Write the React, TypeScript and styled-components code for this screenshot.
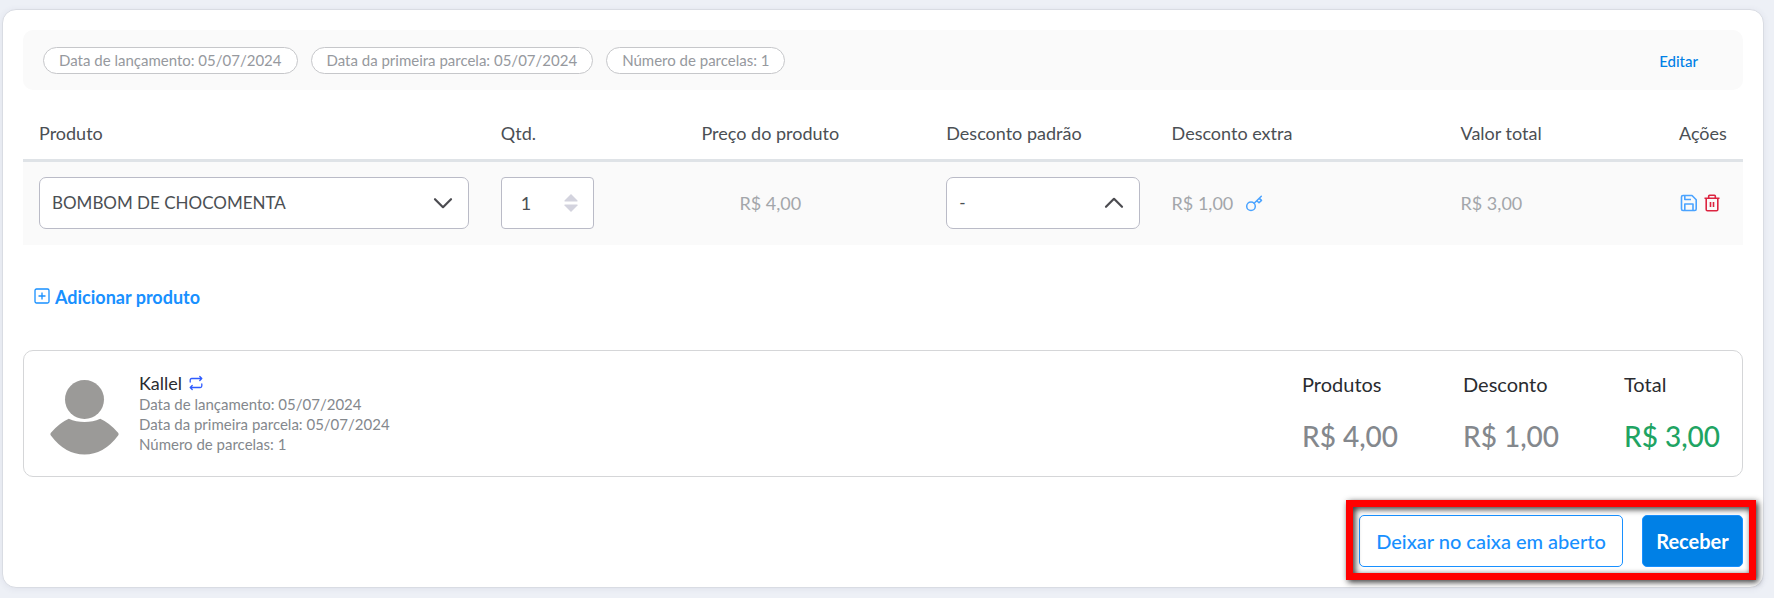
import React from "react";
import styled, { createGlobalStyle } from "styled-components";

const color = {
  page: "#edf0f6",
  edge: "#d9dce3",
  soft: "#fafafa",
  line: "#dfe3e7",
  field: "#babbc7",
  ink: "#4b4f54",
  dark: "#2a2c30",
  muted: "#a3a6aa",
  grey: "#84888d",
  link: "#1890ff",
  primary: "#0080e6",
  green: "#1fa463",
};

const GlobalStyle = createGlobalStyle`
  *, *::before, *::after { box-sizing: border-box; }
  body {
    margin: 0;
    background: ${color.page};
    color: ${color.ink};
    font-family: Lato, "Open Sans", sans-serif;
    font-size: 18px;
    line-height: 24px;
  }
  button, input, select { font: inherit; color: inherit; margin: 0; }
  button { cursor: pointer; }
`;

const Page = styled.div`
  padding: 9px 10px 10px 2px;
`;

const Card = styled.main`
  padding: 20px;
  background: #fff;
  border: 1px solid ${color.edge};
  border-radius: 14px;
  box-shadow: 0 1px 6px rgba(60, 70, 110, 0.08);
`;

const InfoBar = styled.section`
  display: flex;
  align-items: center;
  gap: 13px;
  min-height: 60px;
  padding: 1px 45px 0 20px;
  background: ${color.soft};
  border-radius: 10px;
`;

const Pill = styled.span`
  height: 27px;
  padding: 0 15px;
  border: 1px solid #c6c7ca;
  border-radius: 14px;
  background: #fff;
  color: #96999e;
  font-size: 15px;
  line-height: 25px;
  white-space: nowrap;
`;

const EditLink = styled.a`
  margin-left: auto;
  color: ${color.primary};
  font-size: 15px;
  font-weight: 500;
  text-decoration: none;
`;

const ProductTable = styled.table`
  width: 100%;
  margin-top: 18px;
  table-layout: fixed;
  border-collapse: separate;
  border-spacing: 0;
`;

const Col = styled.col<{ $share?: string }>`
  width: ${(p) => p.$share ?? "auto"};
`;

const Th = styled.th<{ $center?: boolean }>`
  height: 54px;
  padding: 0 16px 2px;
  border-bottom: 3px solid ${color.line};
  text-align: ${(p) => (p.$center ? "center" : "left")};
  font-weight: 400;
  white-space: nowrap;
`;

const Td = styled.td<{ $center?: boolean }>`
  padding: 15px 16px 16px;
  background: ${color.soft};
  color: ${color.muted};
  text-align: ${(p) => (p.$center ? "center" : "left")};
  white-space: nowrap;
`;

const Field = styled.div`
  position: relative;
  color: ${color.ink};
`;

const Select = styled.select<{ $indent: number }>`
  display: block;
  width: 100%;
  height: 52px;
  padding: 0 40px 0 ${(p) => p.$indent}px;
  appearance: none;
  background: #fff;
  border: 1px solid ${color.field};
  border-radius: 7px;
  font-size: 17px;
`;

const Quantity = styled.input`
  display: block;
  width: 100%;
  height: 52px;
  padding: 0 30px 0 19px;
  appearance: textfield;
  background: #fff;
  border: 1px solid ${color.field};
  border-radius: 4px;
  &::-webkit-inner-spin-button { display: none; }
`;

const FieldIcon = styled.svg`
  position: absolute;
  top: 50%;
  right: 16px;
  transform: translateY(-50%);
  pointer-events: none;
`;

const Inline = styled.div<{ $gap: number }>`
  display: flex;
  align-items: center;
  gap: ${(p) => p.$gap}px;
`;

const IconButton = styled.button<{ $tint: string }>`
  display: flex;
  padding: 0;
  border: 0;
  background: none;
  color: ${(p) => p.$tint};
`;

const RowActions = styled(Inline)`
  padding-left: 1px;
`;

const AddButton = styled.button`
  display: flex;
  align-items: center;
  gap: 5px;
  margin: 40px 0 41px 11px;
  padding: 0;
  border: 0;
  background: none;
  color: ${color.link};
  font-weight: 700;
`;

const Summary = styled.section`
  display: flex;
  align-items: flex-start;
  min-height: 127px;
  padding: 21px 20px 20px 26px;
  border: 1px solid #d5d6d8;
  border-radius: 10px;
`;

const Customer = styled.div`
  margin-left: 20px;
  color: ${color.grey};
  font-size: 15px;
  line-height: 20px;
`;

const CustomerName = styled.div`
  display: flex;
  align-items: center;
  gap: 7px;
  color: ${color.dark};
  font-size: 18px;
  line-height: 22px;
`;

const Totals = styled.dl`
  display: grid;
  grid-template-columns: 161px 161px 98px;
  margin: 0 0 0 auto;
`;

const Label = styled.dt`
  color: ${color.dark};
  font-size: 20px;
  line-height: 24px;
`;

const Amount = styled.dd<{ $tint?: string }>`
  margin: 24px 0 0;
  color: ${(p) => p.$tint ?? color.grey};
  font-size: 28px;
  font-weight: 500;
  line-height: 32px;
  white-space: nowrap;
`;

const Actions = styled.div`
  position: relative;
  display: flex;
  gap: 19px;
  width: max-content;
  margin: 38px 0 0 auto;
`;

const Highlight = styled.div`
  position: absolute;
  inset: -15px -13px -13px;
  border: 7px solid #f00;
  filter: drop-shadow(2px 2px 3px rgba(0, 0, 0, 0.85));
  pointer-events: none;
`;

const Button = styled.button<{ $solid?: boolean }>`
  min-width: ${(p) => (p.$solid ? 101 : 264)}px;
  height: 52px;
  padding: 0 12px;
  border: 1px solid ${color.link};
  border-radius: 5px;
  background: ${(p) => (p.$solid ? color.primary : "#fff")};
  color: ${(p) => (p.$solid ? "#fff" : color.link)};
  font-size: 20px;
  font-weight: ${(p) => (p.$solid ? 700 : 500)};
`;

const AvatarSvg = styled.svg`
  margin-top: 7px;
`;

const Chevron = ({ up }: { up?: boolean }) => (
  <FieldIcon width="20" height="12" viewBox="0 0 20 12" fill="none" stroke="#4b4b50" strokeWidth="2.2" strokeLinecap="round" strokeLinejoin="round" aria-hidden>
    <path d={up ? "M2 9.800 10 1.800l8 8" : "M2 2.200 10 10.200l8-8"} />
  </FieldIcon>
);

const Stepper = () => (
  <FieldIcon width="14" height="18" viewBox="0 0 14 18" fill="#d3d3de" aria-hidden>
    <path d="M7 0 13.500 6.400Q14 7.500 13 7.500H1Q0 7.500 .5 6.400Z" />
    <path d="M7 18 13.500 11.600Q14 10.500 13 10.500H1Q0 10.500 .5 11.600Z" />
  </FieldIcon>
);

const KeyIcon = () => (
  <svg width="18" height="18" viewBox="0 0 18 18" fill="none" stroke="currentColor" strokeWidth="1.500" strokeLinejoin="round" strokeLinecap="round" aria-hidden>
    <circle cx="6" cy="12.300" r="4.300" />
    <path d="M9.200 9.200 16.300 2.200M11.800 6.700 14 8.800 16.500 6.400 14.300 4.200" />
  </svg>
);

const SaveIcon = () => (
  <svg width="18" height="18" viewBox="0 0 18 18" fill="none" stroke="currentColor" strokeWidth="1.600" strokeLinejoin="round" aria-hidden>
    <path d="M3 1.500H12L16.200 5.800V15Q16.200 16.500 14.700 16.500H3Q1.500 16.500 1.500 15V3Q1.500 1.500 3 1.500Z" />
    <path d="M4.800 16.500V10H13V16.500M4.800 1.500V5.500H11" />
  </svg>
);

const TrashIcon = () => (
  <svg width="18" height="18" viewBox="0 0 18 18" fill="none" stroke="currentColor" strokeWidth="1.600" strokeLinejoin="round" aria-hidden>
    <path d="M1.500 4.300H16.500M5.700 4.300V2Q5.700 1.200 6.500 1.200H11.500Q12.300 1.200 12.300 2V4.300M3.200 4.300V15.500Q3.200 16.800 4.500 16.800H13.500Q14.800 16.800 14.800 15.500V4.300M7.500 8V13M10.500 8V13" />
  </svg>
);

const PlusSquare = () => (
  <svg width="16" height="18" viewBox="0 0 16 18" fill="none" stroke="currentColor" strokeWidth="1.300" aria-hidden>
    <rect x="1" y="1" width="14" height="14" rx="1.500" />
    <path d="M8 4.500V11.500M4.500 8H11.500" />
  </svg>
);

const SwapIcon = () => (
  <svg width="14" height="16" viewBox="0 0 14 16" fill="none" stroke="currentColor" strokeWidth="1.300" strokeLinejoin="round" strokeLinecap="round" aria-hidden>
    <path d="M1.200 7V5Q1.200 3.500 2.700 3.500H12.800M10.800 1.500 12.800 3.500 10.800 5.500M12.800 9V11Q12.800 12.500 11.300 12.500H1.200M3.200 10.500 1.200 12.500 3.200 14.500" />
  </svg>
);

const Avatar = () => (
  <AvatarSvg width="69" height="76" viewBox="0 0 69 76" fill="#9b9a98" role="img" aria-label="Kallel">
    <circle cx="34.500" cy="20.500" r="19.500" />
    <path d="M18.800 39.700Q26 43 34.500 43T50.200 39.700Q60 44 68.300 54Q69 55.200 68.300 56.200Q54 75.500 34.500 75.500T.7 56.200Q0 55.200 .7 54Q9 44 18.800 39.700Z" />
  </AvatarSvg>
);

export default function App() {
  return (
    <Page>
      <GlobalStyle />
      <Card>
        <InfoBar>
          <Pill>Data de lançamento: 05/07/2024</Pill>
          <Pill>Data da primeira parcela: 05/07/2024</Pill>
          <Pill>Número de parcelas: 1</Pill>
          <EditLink href="#editar">Editar</EditLink>
        </InfoBar>

        <ProductTable>
          <colgroup>
            <Col $share="26.85%" />
            <Col $share="7.3%" />
            <Col $share="18.6%" />
            <Col $share="13.1%" />
            <Col $share="16.8%" />
            <Col $share="12.7%" />
            <Col />
          </colgroup>
          <thead>
            <tr>
              <Th scope="col">Produto</Th>
              <Th scope="col">Qtd.</Th>
              <Th scope="col" $center>Preço do produto</Th>
              <Th scope="col">Desconto padrão</Th>
              <Th scope="col">Desconto extra</Th>
              <Th scope="col">Valor total</Th>
              <Th scope="col">Ações</Th>
            </tr>
          </thead>
          <tbody>
            <tr>
              <Td>
                <Field>
                  <Select $indent={12} aria-label="Produto">
                    <option>BOMBOM DE CHOCOMENTA</option>
                  </Select>
                  <Chevron />
                </Field>
              </Td>
              <Td>
                <Field>
                  <Quantity type="number" aria-label="Qtd." defaultValue={1} min={1} />
                  <Stepper />
                </Field>
              </Td>
              <Td $center>R$ 4,00</Td>
              <Td>
                <Field>
                  <Select $indent={12} aria-label="Desconto padrão">
                    <option>-</option>
                  </Select>
                  <Chevron up />
                </Field>
              </Td>
              <Td>
                <Inline $gap={12}>
                  R$ 1,00
                  <IconButton $tint="#4aa3ff" aria-label="Liberar desconto extra"><KeyIcon /></IconButton>
                </Inline>
              </Td>
              <Td>R$ 3,00</Td>
              <Td>
                <RowActions $gap={5}>
                  <IconButton $tint="#4aa3ff" aria-label="Salvar"><SaveIcon /></IconButton>
                  <IconButton $tint="#dc2440" aria-label="Excluir"><TrashIcon /></IconButton>
                </RowActions>
              </Td>
            </tr>
          </tbody>
        </ProductTable>

        <AddButton><PlusSquare />Adicionar produto</AddButton>

        <Summary>
          <Avatar />
          <Customer>
            <CustomerName>
              Kallel
              <IconButton $tint="#2f5bff" aria-label="Trocar cliente"><SwapIcon /></IconButton>
            </CustomerName>
            <div>Data de lançamento: 05/07/2024</div>
            <div>Data da primeira parcela: 05/07/2024</div>
            <div>Número de parcelas: 1</div>
          </Customer>
          <Totals>
            <div><Label>Produtos</Label><Amount>R$ 4,00</Amount></div>
            <div><Label>Desconto</Label><Amount>R$ 1,00</Amount></div>
            <div><Label>Total</Label><Amount $tint={color.green}>R$ 3,00</Amount></div>
          </Totals>
        </Summary>

        <Actions>
          <Button>Deixar no caixa em aberto</Button>
          <Button $solid>Receber</Button>
          <Highlight />
        </Actions>
      </Card>
    </Page>
  );
}
